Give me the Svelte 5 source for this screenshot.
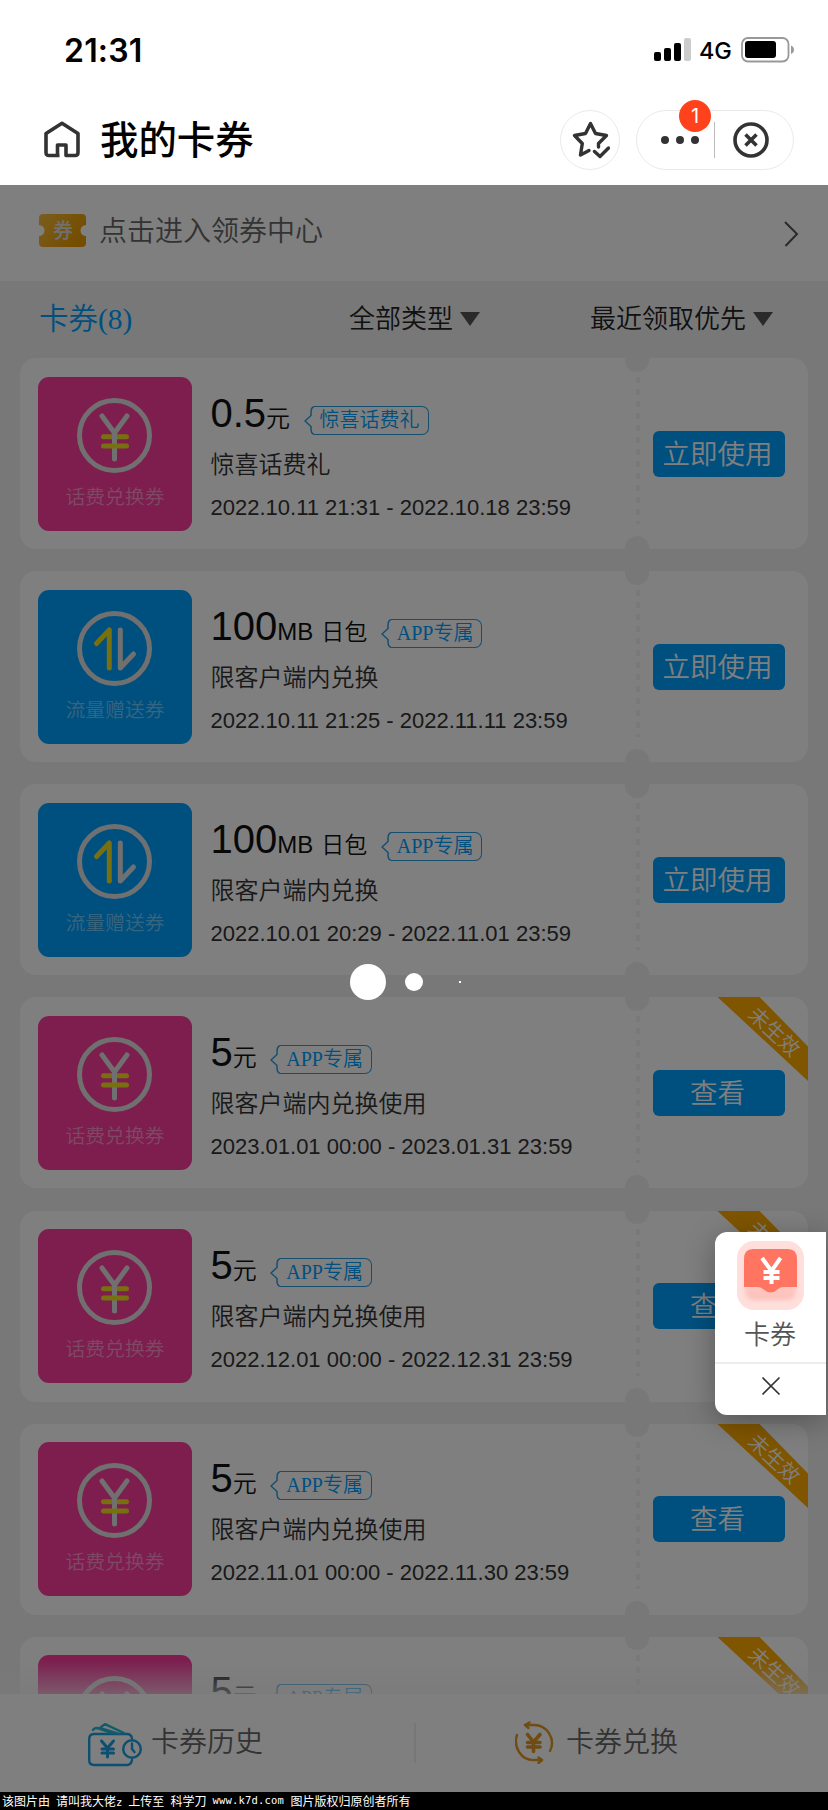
<script>
	const coupons = [
		{ kind: 'fee', amount: '0.5', unit: '元', tag: '惊喜话费礼', desc: '惊喜话费礼', date: '2022.10.11 21:31 - 2022.10.18 23:59', pending: false },
		{ kind: 'data', amount: '100', unit: 'MB', extra: '日包', tag: 'APP专属', desc: '限客户端内兑换', date: '2022.10.11 21:25 - 2022.11.11 23:59', pending: false },
		{ kind: 'data', amount: '100', unit: 'MB', extra: '日包', tag: 'APP专属', desc: '限客户端内兑换', date: '2022.10.01 20:29 - 2022.11.01 23:59', pending: false },
		{ kind: 'fee', amount: '5', unit: '元', tag: 'APP专属', desc: '限客户端内兑换使用', date: '2023.01.01 00:00 - 2023.01.31 23:59', pending: true },
		{ kind: 'fee', amount: '5', unit: '元', tag: 'APP专属', desc: '限客户端内兑换使用', date: '2022.12.01 00:00 - 2022.12.31 23:59', pending: true },
		{ kind: 'fee', amount: '5', unit: '元', tag: 'APP专属', desc: '限客户端内兑换使用', date: '2022.11.01 00:00 - 2022.11.30 23:59', pending: true },
		{ kind: 'fee', amount: '5', unit: '元', tag: 'APP专属', pending: true }
	];

	let panelOpen = $state(true);
</script>

<div class="app">
	<div class="status">
		<span class="time">21:31</span>
		<div class="signals">
			<svg width="37" height="24" viewBox="0 0 37 24">
				<rect x="0" y="14" width="7" height="9" rx="2" />
				<rect x="10" y="10" width="7" height="13" rx="2" />
				<rect x="20" y="5" width="7" height="18" rx="2" />
				<rect x="30" y="0" width="7" height="23" rx="2" fill="#ccc" />
			</svg>
			<span class="network">4G</span>
			<svg width="54" height="26" viewBox="0 0 54 26">
				<rect x="1" y="1" width="46.5" height="23.5" rx="6" fill="none" stroke="#999" stroke-width="1.8" />
				<rect x="4" y="4" width="31" height="17" rx="3" />
				<path d="M50 8.5c4 1.500 4 7 0 8.500z" fill="#999" />
			</svg>
		</div>
	</div>

	<header class="navbar">
		<svg class="home" width="36" height="37" viewBox="0 0 36 37" fill="none" stroke="#333" stroke-width="3.6">
			<path d="M15.500 34.500H5Q2 34.500 2 31.500V12.500L18 2.300L34 12.500V31.500Q34 34.500 31 34.500H22V24H13.500V36" stroke-linejoin="round" />
		</svg>
		<h1>我的卡券</h1>
		<button class="round" aria-label="收藏">
			<svg width="38" height="38" viewBox="0 0 38 38" fill="none" stroke="#333" stroke-width="3.4" stroke-linejoin="round" stroke-linecap="round">
				<path d="M17 29.500L8.500 34L10.300 22.500L2.500 14.500L13.500 12.500L18.500 2.500L23.500 12.500L34.500 14.500L26.500 22.500V26" />
				<path d="M22.500 30.500L28 35.500L36.500 27" />
			</svg>
		</button>
		<div class="capsule">
			<div class="more">
				<i></i><i></i><i></i>
				<span class="badge">1</span>
			</div>
			<div class="close">
				<svg width="36" height="36" viewBox="0 0 36 36" fill="none" stroke="#333" stroke-width="3.6">
					<circle cx="18" cy="18" r="16" />
					<path d="M12.500 12.500L23.500 23.500M23.500 12.500L12.500 23.500" />
				</svg>
			</div>
		</div>
	</header>

	<main>
		<a class="banner" href="#center">
			<svg width="47" height="33" viewBox="0 0 47 33">
				<defs>
					<linearGradient id="gold" x1="0" y1="0" x2="1" y2="0.5">
						<stop offset="0" stop-color="#f5bd3c" />
						<stop offset="1" stop-color="#e89a00" />
					</linearGradient>
				</defs>
				<path d="M4 0H43Q47 0 47 4V11A5.500 5.500 0 0 0 47 22V29Q47 33 43 33H4Q0 33 0 29V22A5.500 5.500 0 0 0 0 11V4Q0 0 4 0Z" fill="url(#gold)" />
				<text x="24" y="24" text-anchor="middle">券</text>
			</svg>
			<span>点击进入领券中心</span>
			<svg class="arrow" width="15" height="26" viewBox="0 0 15 26" fill="none" stroke="#555" stroke-width="2">
				<path d="M1 1L13 13L1.500 25" />
			</svg>
		</a>

		<div class="filters">
			<span class="count">卡券(8)</span>
			<span class="filter type">全部类型<i></i></span>
			<span class="filter">最近领取优先<i></i></span>
		</div>

		<div class="list">
			{#each coupons as coupon}
				<article class="coupon">
					<div class="tile {coupon.kind}">
						<svg width="154" height="105" viewBox="0 0 154 105" fill="none" stroke-width="5" stroke-linecap="round" stroke-linejoin="round">
							<circle cx="76.500" cy="58.500" r="35" stroke="#e0e0e0" />
							{#if coupon.kind === 'fee'}
								<path d="M65.500 59.700H88.500" stroke="#f0e020" />
								<path d="M64 39L76.500 56L89 39M76.500 56V82" stroke="#e0e0e0" />
								<path d="M65.500 69H88.500" stroke="#f0e020" />
							{:else}
								<path d="M58.500 53.500L71.300 40V78" stroke="#f0e020" />
								<path d="M82.300 40V78L95.500 64" stroke="#e0e0e0" />
							{/if}
						</svg>
						<span>{coupon.kind === 'fee' ? '话费兑换券' : '流量赠送券'}</span>
					</div>
					<div class="info">
						<div class="amount">
							<strong>{coupon.amount}</strong>
							<span class="unit">{coupon.unit}</span>
							{#if coupon.extra}<span class="extra">{coupon.extra}</span>{/if}
							<span class="tag">
								<svg width="10" height="29" viewBox="0 0 10 29" fill="none" stroke="#2a9fe0" stroke-width="1.500">
									<path d="M10 .700Q7 1.500 7 6.500V9.500L1 15L7 20.500V22.500Q7 27.500 10 28.300" />
								</svg>
								<em>{coupon.tag}</em>
							</span>
						</div>
						{#if coupon.desc}
							<p class="desc">{coupon.desc}</p>
							<p class="date">{coupon.date}</p>
						{/if}
					</div>
					<div class="perforation"></div>
					<button class="action">{coupon.pending ? '查看' : '立即使用'}</button>
					{#if coupon.pending}
						<svg class="ribbon" width="91" height="84" viewBox="0 0 91 84">
							<polygon points="0.500,0 42.500,0 91,49.500 91,84" fill="#ffaa00" />
							<text transform="translate(57 35) rotate(43)" text-anchor="middle" y="7">未生效</text>
						</svg>
					{/if}
				</article>
			{/each}
		</div>

		<footer>
			<a class="history" href="#history">
				<svg width="54" height="44" viewBox="0 0 54 44" fill="none" stroke="#1b9fe0" stroke-width="2.400" stroke-linecap="round" stroke-linejoin="round">
					<path d="M44 15Q43 11 39 11H6Q1.200 11 1.200 16V37Q1.200 42 6 42H39Q43 42 44 37" />
					<path d="M5 7Q6 5 9 5L15 6L31 11M13 4L17 1.200L36 10M11 5.500L24 10" stroke="#25b6d0" />
					<circle cx="44" cy="26" r="8.800" />
					<path d="M44 20.500V26L46.500 29" />
					<path d="M13.500 18L19.500 25L25.500 18M19.500 25V34M14 26H25.500M14 30H25.500" stroke-width="3" />
				</svg>
				<span>卡券历史</span>
			</a>
			<a class="exchange" href="#exchange">
				<svg width="39" height="43" viewBox="0 0 39 43" fill="none" stroke="#e0982a" stroke-width="2.400" stroke-linecap="round" stroke-linejoin="round">
					<path d="M10 4H18A18 18 0 0 1 35 30M2 14Q-1 23 4 31Q10 40 20 39H27" />
					<path d="M14.500 1.500L10 4L13.500 7M23.500 36.500L27 39L23.500 42" />
					<path d="M12.500 13.500L18.500 21L25 13.500M18.500 21V30.500M12.500 21.500H25M12.500 26H25" stroke-width="3.600" />
				</svg>
				<span>卡券兑换</span>
			</a>
		</footer>

		<div class="mask"></div>
		<div class="loader"><i class="big"></i><i class="mid"></i><i class="tiny"></i></div>

		{#if panelOpen}
			<aside class="panel">
				<div class="entry">
					<svg width="67" height="69" viewBox="0 0 67 69">
						<defs>
							<linearGradient id="pocket" x1="0" y1="0" x2="0" y2="1">
								<stop offset="0" stop-color="#ffd9d5" />
								<stop offset="1" stop-color="#fdc0ba" />
							</linearGradient>
							<filter id="soft"><feGaussianBlur stdDeviation="2" /></filter>
						</defs>
						<rect width="67" height="69" rx="17" fill="#ffdfdb" />
						<rect x="8" y="16" width="51" height="43" rx="8" fill="url(#pocket)" filter="url(#soft)" />
						<path d="M7 46V18Q7 8 16 8H51Q60 8 60 18V46H47Q43 46 41 48Q34 55 26 48Q24 46 20 46Z" fill="#ff7562" />
						<path d="M25 17L34.500 30L43.500 17M34.500 30V43M26.500 31H42.500M26.500 37H42.500" fill="none" stroke="#fff" stroke-width="4" />
					</svg>
					<span>卡券</span>
				</div>
				<button class="dismiss" aria-label="关闭" onclick={() => (panelOpen = false)}>
					<svg width="20" height="20" viewBox="0 0 20 20" stroke="#333" stroke-width="1.700">
						<path d="M1.500 1.500L18.500 18.500M18.500 1.500L1.500 18.500" />
					</svg>
				</button>
			</aside>
		{/if}
	</main>

	<div class="credit">
		<span>该图片由</span>
		<span>请叫我大佬<b>z</b></span>
		<span>上传至</span>
		<span>科学刀</span>
		<span class="url">www.k7d.com</span>
		<span>图片版权归原创者所有</span>
	</div>
</div>

<style>
	:global(body) {
		background: #fff;
	}

	.app {
		display: flex;
		flex-direction: column;
		width: 828px;
		height: 1810px;
		overflow: hidden;
		font-family: 'Liberation Sans', 'Noto Sans CJK SC', sans-serif;
		font-weight: 350;
	}

	.app * {
		box-sizing: border-box;
	}

	svg {
		display: block;
		flex: none;
	}

	button {
		border: 0;
		padding: 0;
		font: inherit;
	}

	a {
		color: inherit;
		text-decoration: none;
	}

	.status {
		display: flex;
		justify-content: space-between;
		align-items: center;
		height: 100px;
		padding: 0 33px 0 64px;
	}

	.time {
		font-family: Inter, sans-serif;
		font-size: 32px;
		font-weight: 600;
		letter-spacing: 0.2px;
	}

	.signals {
		display: flex;
		align-items: center;
	}

	.network {
		width: 32px;
		margin: 1px 10px 0 8px;
		font-family: Inter, sans-serif;
		font-size: 23.500px;
		font-weight: 500;
		letter-spacing: -0.2px;
	}

	.navbar {
		display: flex;
		align-items: center;
		height: 85px;
		padding: 0 34px 5px 44px;
	}

	.home {
		margin-top: -2px;
	}

	h1 {
		flex: 1;
		margin: -7px 0 0 20px;
		font-family: 'Noto Sans CJK SC', sans-serif;
		font-size: 38.400px;
		font-weight: 500;
		line-height: 50px;
	}

	.round {
		display: flex;
		align-items: center;
		justify-content: center;
		width: 60px;
		height: 60px;
		padding-left: 2px;
		border: 1px solid #eaeaea;
		border-radius: 30px;
		background: #fff;
	}

	.capsule {
		display: flex;
		align-items: center;
		width: 158px;
		height: 60px;
		margin-left: 16px;
		border: 1px solid #eaeaea;
		border-radius: 30px;
	}

	.more {
		position: relative;
		display: flex;
		align-items: center;
		gap: 7px;
		width: 78px;
		height: 36px;
		padding-left: 24px;
		border-right: 1px solid #bbb;
	}

	.more i {
		width: 8px;
		height: 8px;
		border-radius: 50%;
		background: #333;
	}

	.badge {
		position: absolute;
		top: -22px;
		left: 42px;
		width: 32px;
		height: 32px;
		border-radius: 50%;
		background: #ff411c;
		color: #fff;
		font: 400 20px/32px Inter, sans-serif;
		text-align: center;
	}

	.close {
		display: flex;
		flex: 1;
		justify-content: center;
		padding-right: 7px;
	}

	main {
		position: relative;
		display: flex;
		flex: 1;
		flex-direction: column;
		min-height: 0;
		overflow: hidden;
		background: #f0f0f0;
	}

	.banner {
		display: flex;
		flex: none;
		align-items: center;
		height: 96px;
		padding: 0 29px 5px 39px;
		background: #fff;
		color: #666;
		font-size: 28px;
	}

	.banner text {
		fill: #e0e0e0;
		font-size: 20px;
		font-weight: 500;
	}

	.banner span {
		flex: 1;
		margin: -4px 0 0 13px;
	}

	.banner .arrow {
		margin-top: 7px;
	}

	.filters {
		display: flex;
		flex: none;
		align-items: center;
		height: 77px;
		padding: 0 55px 6px 39px;
		color: #222;
		font-size: 26px;
	}

	.count {
		width: 310px;
		margin-top: -2px;
		color: #00a0ff;
		font-family: 'Liberation Serif', 'Noto Sans CJK SC', serif;
		font-size: 29.500px;
	}

	.filter {
		display: flex;
		align-items: center;
	}

	.filter.type {
		flex: 1;
	}

	.filter i {
		margin: 5px 0 0 7px;
		border: 10px solid transparent;
		border-top: 14px solid #555;
		border-bottom: 0;
	}

	.list {
		display: flex;
		flex-direction: column;
		flex: 1;
		gap: 22.140px;
		min-height: 0;
		overflow: hidden;
		padding: 0 20px;
	}

	.coupon {
		position: relative;
		display: flex;
		flex: none;
		height: 191px;
		padding: 18.700px 23px 0 18px;
		border-radius: 16px;
		background: #fff;
		overflow: hidden;
	}

	.tile {
		width: 154px;
		height: 154px;
		border-radius: 11px;
		text-align: center;
		color: rgba(255, 255, 255, 0.45);
		font-size: 19.800px;
		line-height: 30px;
	}

	.tile.fee {
		background: #fa3c9e;
	}

	.tile.data {
		background: #00a0ff;
	}

	.info {
		width: 425px;
		margin-left: 18.500px;
		padding-top: 16px;
	}

	.amount {
		display: flex;
		align-items: baseline;
		height: 40px;
		line-height: 40px;
		color: #111;
	}

	.amount strong {
		font-size: 40px;
		font-weight: 400;
	}

	.unit {
		font-size: 24px;
	}

	.extra {
		margin-left: 8px;
		font-size: 23px;
	}

	.tag {
		display: flex;
		align-self: flex-start;
		height: 29px;
		margin: 13px 0 0 13.500px;
	}

	.tag em {
		padding: 0 8px 0 6px;
		border: 1.500px solid #2a9fe0;
		border-left: 0;
		border-radius: 0 7px 7px 0;
		color: #00a0ff;
		font: 350 20px/27px 'Liberation Serif', 'Noto Sans CJK SC', serif;
	}

	p {
		margin: 0;
		color: #333;
		line-height: 30px;
	}

	.desc {
		margin-top: 17px;
		font-size: 24px;
	}

	.date {
		margin-top: 13px;
		font-size: 22px;
	}

	/* dotted tear line with a notch at each end */
	.perforation {
		position: relative;
		width: 4px;
		height: 147px;
		background: repeating-linear-gradient(#f2f2f2 0 6px, transparent 6px 12px);
	}

	.perforation::before,
	.perforation::after {
		content: '';
		position: absolute;
		left: -11px;
		width: 24px;
		height: 24px;
		border-radius: 50%;
		background: #f0f0f0;
	}

	.perforation::before {
		top: -29px;
	}

	.perforation::after {
		top: 159px;
	}

	.action {
		width: 132px;
		height: 46px;
		margin: 54px 0 0 auto;
		padding: 1px 3px 0 0;
		border-radius: 6px;
		background: #00a0ff;
		color: #fff;
		font-size: 27.500px;
		line-height: 46px;
	}

	.ribbon {
		position: absolute;
		top: 0;
		right: 0;
	}

	.ribbon text {
		fill: #fff;
		font-size: 20.500px;
	}

	footer {
		position: relative;
		display: flex;
		flex: none;
		align-items: center;
		height: 98px;
		background: #fff;
		color: #666;
		font-size: 28px;
	}

	footer::before {
		content: '';
		position: absolute;
		left: 0;
		right: 0;
		bottom: 100%;
		height: 34px;
		background: linear-gradient(rgba(244, 244, 244, 0), rgba(244, 244, 244, 0.65));
	}

	footer a {
		display: flex;
		flex: none;
		align-items: center;
		height: 40px;
	}

	.history {
		width: 416px;
		padding-left: 88px;
		border-right: 2px solid #eee;
	}

	.history svg {
		margin-top: 4px;
	}

	.history span {
		margin: -6px 0 0 9px;
	}

	.exchange {
		padding-left: 99px;
	}

	.exchange svg {
		margin-top: -2px;
	}

	.exchange span {
		margin: -6px 0 0 12px;
	}

	.mask {
		position: absolute;
		inset: 0;
		background: rgba(0, 0, 0, 0.5);
	}

	.loader {
		position: absolute;
		top: 779px;
		left: 350px;
		display: flex;
		align-items: center;
		height: 36px;
	}

	.loader i {
		border-radius: 50%;
		background: #fff;
	}

	.loader .big {
		width: 36px;
		height: 36px;
	}

	.loader .mid {
		width: 18px;
		height: 18px;
		margin-left: 19px;
	}

	.loader .tiny {
		width: 2px;
		height: 2px;
		margin-left: 36px;
		border-radius: 0;
	}

	.panel {
		position: absolute;
		top: 1047px;
		right: 2px;
		width: 111px;
		height: 183px;
		border-radius: 12px 0 0 12px;
		background: #fff;
		box-shadow: 0 6px 30px rgba(0, 0, 0, 0.3);
	}

	.entry {
		display: flex;
		flex-direction: column;
		align-items: center;
		height: 132px;
		padding: 9px 1px 0 0;
		border-bottom: 2px solid #ededed;
		color: #555;
		font-size: 26px;
		line-height: 50px;
	}

	.dismiss {
		display: flex;
		align-items: center;
		justify-content: center;
		width: 100%;
		height: 43px;
		background: none;
	}

	.credit {
		display: flex;
		gap: 6px;
		height: 18px;
		padding-left: 2px;
		background: #000;
		color: #fff;
		font: 400 12px/17px 'Noto Sans CJK SC', sans-serif;
		white-space: nowrap;
	}

	.credit b,
	.url {
		font-family: 'DejaVu Sans Mono', monospace;
		font-size: 10.500px;
		font-weight: 400;
	}

	.url {
		width: 72px;
		letter-spacing: 0.2px;
	}
</style>
